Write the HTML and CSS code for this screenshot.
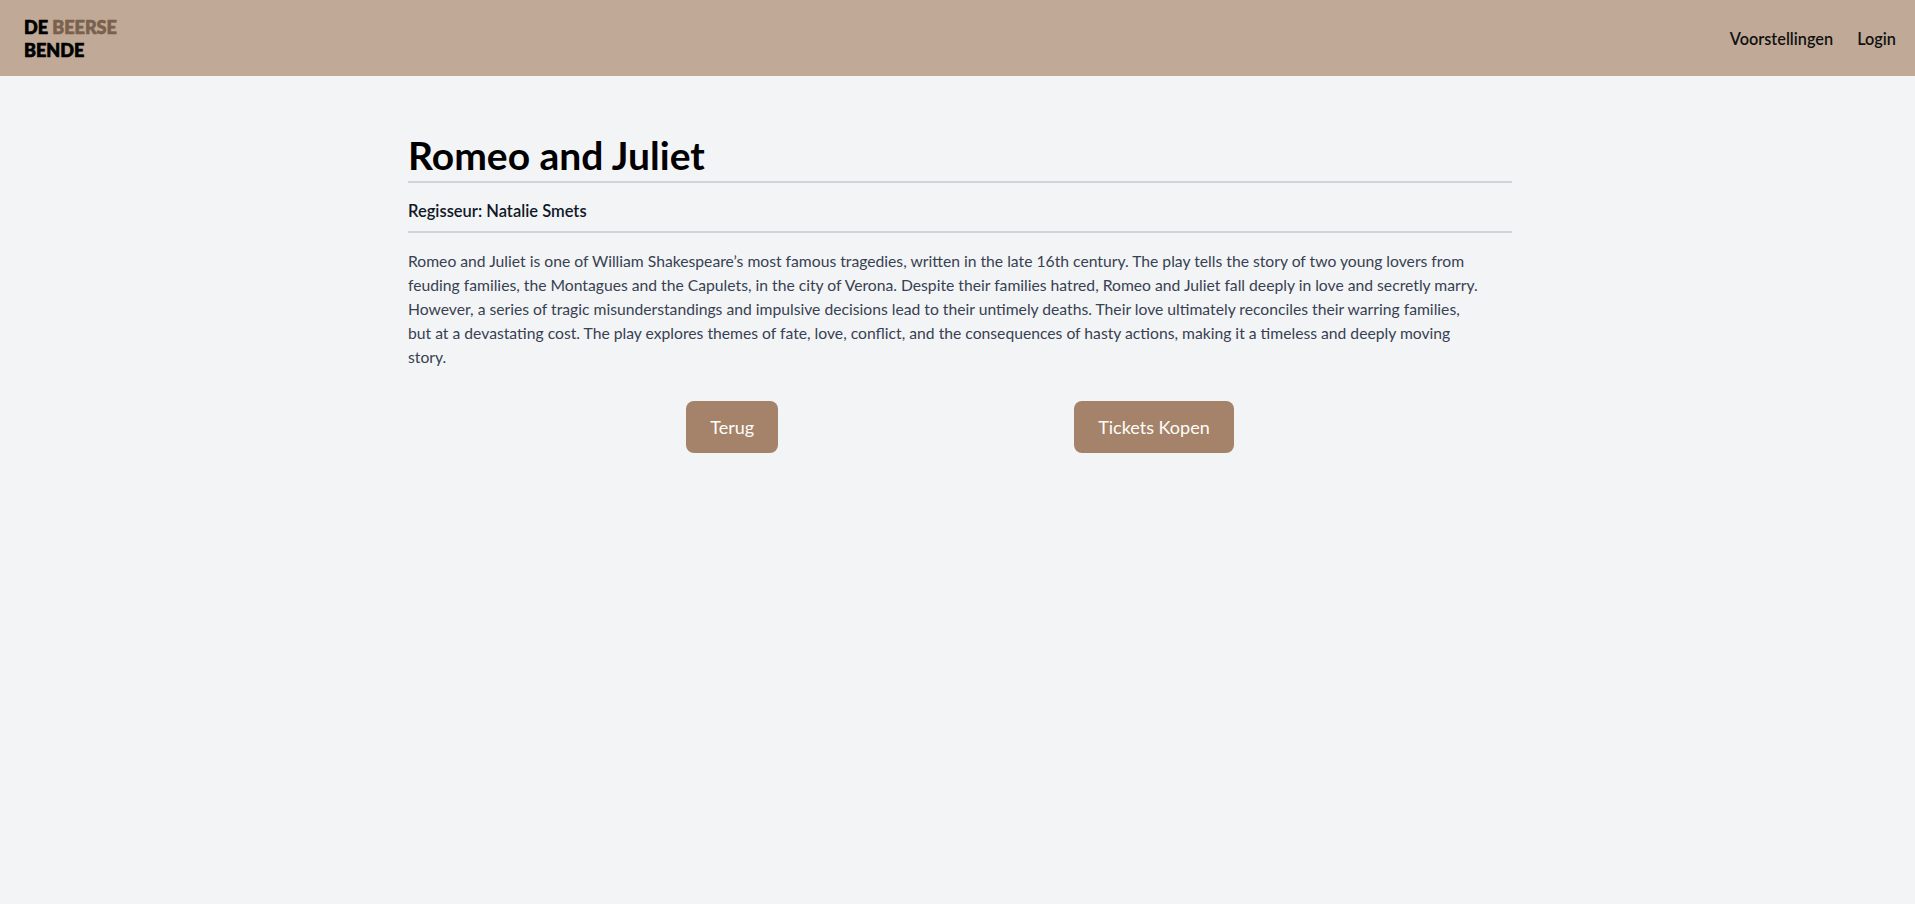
FILE: index.html
```html
<!DOCTYPE html>
<html lang="nl">
<head>
<meta charset="utf-8">
<title>Romeo and Juliet - De Beerse Bende</title>
<link rel="stylesheet" href="styles.css">
</head>
<body>
<div class="page">
  <header class="site-header">
    <a class="logo" href="#">
      <span class="logo-line">DE <span class="logo-accent">BEERSE</span></span>
      <span class="logo-line">BENDE</span>
    </a>
    <nav class="nav">
      <a class="nav-link" href="#">Voorstellingen</a>
      <a class="nav-link" href="#">Login</a>
    </nav>
  </header>

  <main class="container">
    <h1 class="title">Romeo and Juliet</h1>
    <div class="director">Regisseur: Natalie Smets</div>
    <p class="description">Romeo and Juliet is one of William Shakespeare’s most famous tragedies, written in the late 16th century. The play tells the story of two young lovers from<br>
feuding families, the Montagues and the Capulets, in the city of Verona. Despite their families hatred, Romeo and Juliet fall deeply in love and secretly marry.<br>
However, a series of tragic misunderstandings and impulsive decisions lead to their untimely deaths. Their love ultimately reconciles their warring families,<br>
but at a devastating cost. The play explores themes of fate, love, conflict, and the consequences of hasty actions, making it a timeless and deeply moving<br>
story.</p>
    <div class="actions">
      <a class="btn" href="#">Terug</a>
      <a class="btn" href="#">Tickets Kopen</a>
    </div>
  </main>
</div>
</body>
</html>
```
FILE: styles.css
```css
html {
  overflow-x: hidden;
}

body {
  margin: 0;
  background: #f3f4f6;
  font-family: "Lato", "Noto Sans", sans-serif;
  color: #111827;
}

.page {
  width: 1920px;
  min-height: 904px;
}

a {
  text-decoration: none;
  color: inherit;
}

.site-header {
  height: 76px;
  background: #c0aa97;
  display: flex;
  align-items: center;
  justify-content: space-between;
  padding: 2px 24px 0;
  box-sizing: border-box;
}

.logo {
  display: flex;
  flex-direction: column;
  font-weight: 900;
  font-size: 18px;
  line-height: 23px;
  color: #000;
  -webkit-text-stroke: 0.7px currentColor;
}

.logo-accent {
  color: #7a614d;
}

.nav {
  display: flex;
  gap: 24px;
}

.nav-link {
  font-size: 16.3px;
  font-weight: 600;
  line-height: 24px;
  color: #111;
}

.container {
  width: 1104px;
  margin: 0 auto;
  padding-top: 56px;
}

.title {
  margin: 0;
  font-size: 39px;
  line-height: 47px;
  font-weight: 700;
  color: #000;
  padding-bottom: 2px;
  border-bottom: 2px solid #d1d5db;
}

.director {
  font-size: 16.5px;
  line-height: 24px;
  font-weight: 600;
  color: #111827;
  padding: 16px 0 8px;
  border-bottom: 2px solid #d1d5db;
}

.description {
  margin: 16px -8px 0 0;
  font-size: 15.7px;
  line-height: 24px;
  color: #374151;
}

.actions {
  display: flex;
  justify-content: center;
  gap: 296px;
  margin-top: 32px;
}

.btn {
  display: inline-block;
  background: #a5836a;
  color: #fffdf8;
  font-size: 18px;
  line-height: 28px;
  padding: 12px 24px;
  border-radius: 8px;
}
```
